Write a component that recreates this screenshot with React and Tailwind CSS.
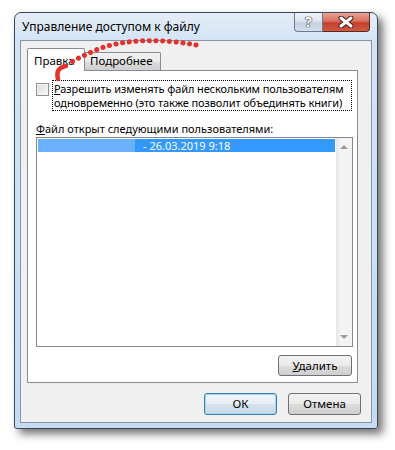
import React from "react";

const btn =
  "flex items-center justify-center rounded-[3px] border border-[#707070] bg-[linear-gradient(to_bottom,#f2f2f2_0%,#ebebeb_50%,#dddddd_50%,#cfcfcf_100%)] text-black";

export default function App() {
  return (
    <div className="relative w-[395px] h-[450px] bg-white pl-[14px] pt-[12px] font-['Noto_Sans','DejaVu_Sans',sans-serif] text-[11px] text-black overflow-hidden">
      <div className="w-[364px] h-[417px] flex flex-col rounded-t-[7px] rounded-b-[3px] border border-[#3d4653] bg-[linear-gradient(to_bottom,#e4edf7_0px,#d3e3f4_30px,#c6dcf3_100%)] shadow-[5px_5px_9px_rgba(0,0,0,0.55)]">
        {/* title bar */}
        <div className="h-[27px] flex items-start shrink-0">
          <div className="pl-[7px] pt-[6px] text-[12px] leading-[15px] text-black whitespace-nowrap">
            Управление доступом к файлу
          </div>
          <div className="ml-auto mr-[7px] flex">
            <div className="w-[29px] h-[19px] rounded-bl-[4px] border border-t-0 border-[#6b7b90] bg-[linear-gradient(to_bottom,#eef3f9_0%,#dbe4ef_45%,#c3d1e2_55%,#d3deeb_100%)] flex items-center justify-center">
              <span className="text-[14px] leading-[14px] font-bold text-white [text-shadow:0_0_1px_#333,0_0_1px_#333,0_0_1px_#333]">
                ?
              </span>
            </div>
            <div className="w-[47px] h-[19px] rounded-br-[4px] border border-t-0 border-l-0 border-[#5a2a22] bg-[linear-gradient(to_bottom,#e8a596_0%,#d9705f_45%,#c2412d_55%,#cf5a42_100%)] flex items-center justify-center">
              <svg width="16" height="12" viewBox="0 0 16 12">
                <path d="M3 2 L13 10 M13 2 L3 10" stroke="#4a1d16" strokeWidth="5" strokeLinecap="round" />
                <path d="M3 2 L13 10 M13 2 L3 10" stroke="#ffffff" strokeWidth="3" strokeLinecap="round" />
              </svg>
            </div>
          </div>
        </div>

        {/* client area */}
        <div className="mx-[5px] mb-[5px] flex-1 border border-[#8596aa] bg-[#f0f0f0] flex flex-col">
          {/* tabs */}
          <div className="mt-[7px] ml-[6px] h-[22px] flex items-end">
            <div className="relative z-10 -mb-px w-[58px] h-[23px] border border-b-0 border-[#898c95] rounded-t-[2px] bg-white pl-[6px] pt-[5px] leading-[14px] text-[11.5px] whitespace-nowrap">
              Правка
            </div>
            <div className="w-[76px] h-[18px] border border-l-0 border-b-0 border-[#898c95] rounded-tr-[2px] bg-[linear-gradient(to_bottom,#f2f2f2_0%,#ebebeb_50%,#dddddd_50%,#cfcfcf_100%)] pl-[5px] pt-[1px] leading-[14px] text-[11.5px] whitespace-nowrap">
              Подробнее
            </div>
          </div>
          {/* tab panel */}
          <div className="ml-[6px] w-[331px] h-[313px] border border-[#898c95] bg-white flex flex-col pl-[8px] pr-[4px]">
            <div className="mt-[9px] flex items-start">
              <div className="mt-[3px] w-[13px] h-[13px] border border-[#8e8f8f] bg-[linear-gradient(135deg,#dcdcdc_0%,#f7f7f7_100%)] shadow-[inset_0_0_0_1px_#f4f4f4]" />
              <div className="ml-[3px] w-[300px] h-[31px] border border-dotted border-black px-[1px] pt-[1px] leading-[14px] whitespace-nowrap tracking-[-0.1px]">
                <div>
                  <span className="underline">Р</span>азрешить изменять файл нескольким пользователям
                </div>
                <div>одновременно (это также позволит объединять книги)</div>
              </div>
            </div>
            <div className="mt-[10px] leading-[15px] whitespace-nowrap">
              <span className="underline">Ф</span>айл открыт следующими пользователями:
            </div>
            <div className="mt-[1px] h-[210px] border border-[#828790] bg-white flex">
              <div className="flex-1 pt-[1px] pl-[1px]">
                <div className="h-[13px] flex">
                  <div className="w-[97px] bg-[#6cb1fb]" />
                  <div className="flex-1 bg-[#3399ff] text-white leading-[13px] pl-[8px] whitespace-nowrap">
                    - 26.03.2019 9:18
                  </div>
                </div>
              </div>
              <div className="w-[16px] ml-[1px] bg-[linear-gradient(to_right,#e6e6e6,#f4f4f4_30%,#f4f4f4)] flex flex-col items-center justify-between py-[7px]">
                <div className="w-0 h-0 border-l-[4px] border-r-[4px] border-b-[4px] border-l-transparent border-r-transparent border-b-[#9a9a9a]" />
                <div className="w-0 h-0 border-l-[4px] border-r-[4px] border-t-[4px] border-l-transparent border-r-transparent border-t-[#9a9a9a]" />
              </div>
            </div>
            <div className="mt-[8px] self-end mr-[1px] w-[74px] h-[21px]">
              <div className={btn + " w-full h-full text-[11.5px]"}>
                <span><span className="underline">У</span>далить</span>
              </div>
            </div>
          </div>
          {/* bottom buttons */}
          <div className="mt-[10px] ml-[183px] flex gap-[11px] text-[11.5px]">
            <div className="w-[73px] h-[22px] flex items-center justify-center rounded-[3px] border border-[#3c7fb1] bg-[linear-gradient(to_bottom,#f2f7fb_0%,#e6eef6_50%,#d6e2ee_50%,#cbd9e8_100%)] shadow-[inset_0_0_0_1px_#9fd6f2]">
              ОК
            </div>
            <div className={btn + " w-[73px] h-[22px]"}>Отмена</div>
          </div>
        </div>
      </div>

      {/* red dotted annotation arrow */}
      <svg className="absolute left-0 top-0 z-20 pointer-events-none" width="395" height="450" viewBox="0 0 395 450">
        <path
          d="M196 45 C 165 39, 125 38, 96 50 C 85 55, 76 59, 70 63"
          fill="none"
          stroke="#e4312d"
          strokeWidth="5"
          strokeLinecap="round"
          strokeDasharray="0.1 6.6"
        />
        <path d="M66 66 Q 55 68 58 79" fill="none" stroke="#e4312d" strokeWidth="4.5" strokeLinecap="round" />
      </svg>
    </div>
  );
}
